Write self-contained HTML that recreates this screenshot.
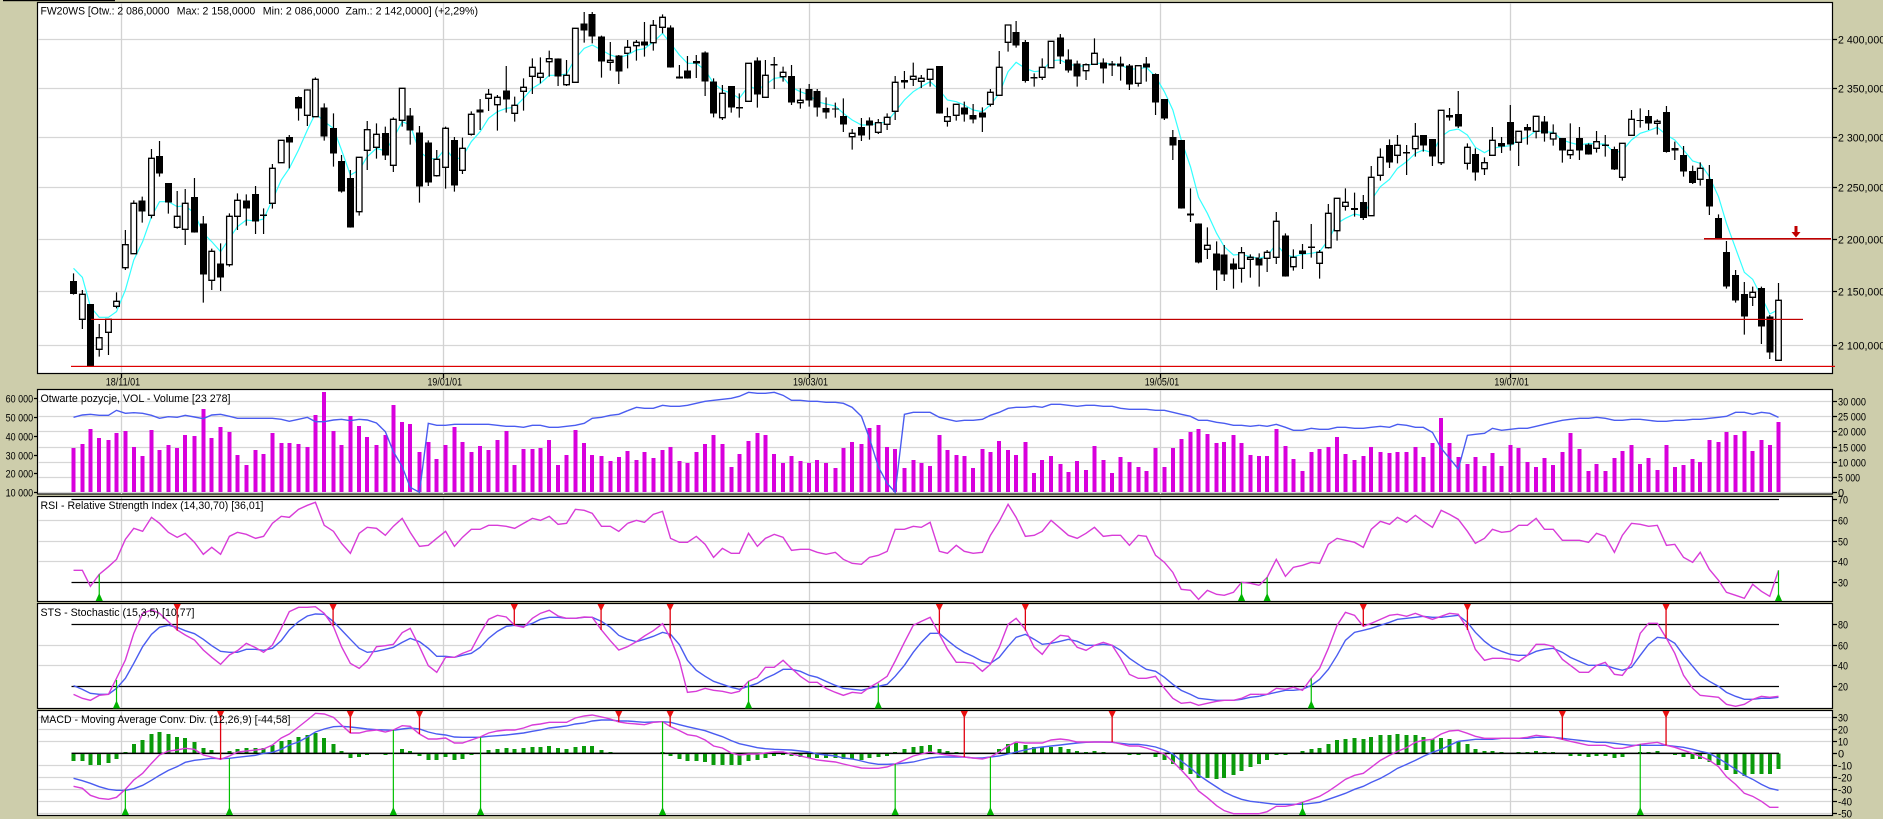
<!DOCTYPE html>
<html><head><meta charset="utf-8"><title>FW20WS</title>
<style>
html,body{margin:0;padding:0;background:#cdcdab;overflow:hidden}
svg{display:block}
svg path{vector-effect:non-scaling-stroke;fill:none}
text{font-family:"Liberation Sans",sans-serif;font-size:11px;fill:#000}
.g{stroke:#d6d6d6;stroke-width:1.3}
.v{stroke:#d2d2d2;stroke-width:1.3}
.k{stroke:#000;stroke-width:1.3}
.wk{stroke:#000;stroke-width:1.2}
.bb{stroke:#000;stroke-width:7;shape-rendering:crispEdges}
.wb{stroke:#000;stroke-width:1.3;fill:#fff}
.cy{stroke:#33ffff;stroke-width:1.2}
.vo{stroke:#d800dc;stroke-width:4;shape-rendering:crispEdges}
.bl{stroke:#4a5cf0;stroke-width:1.4}
.mg{stroke:#d83cd8;stroke-width:1.4}
.hi{stroke:#0a9a0a;stroke-width:4;shape-rendering:crispEdges}
.gl{stroke:#00c000;stroke-width:1.2}
.gt{fill:#00b400}
.rl{stroke:#e00010;stroke-width:1.3}
.rt{fill:#e81010}
.fr{fill:#fff;stroke:#000;stroke-width:1.2}
</style></head><body>
<svg xmlns="http://www.w3.org/2000/svg" width="1883" height="819" viewBox="0 0 1883 819">
<rect width="1883" height="819" fill="#cdcdab"/>
<rect x="3" y="0" width="112" height="1.2" fill="#000"/>
<rect class="fr" x="37.5" y="2.5" width="1795" height="371"/>
<rect class="fr" x="37.5" y="389.5" width="1795" height="104.5"/>
<rect class="fr" x="37.5" y="496.5" width="1795" height="105"/>
<rect class="fr" x="37.5" y="603.5" width="1795" height="105"/>
<rect class="fr" x="37.5" y="710.5" width="1795" height="105"/>

<path class="g" d="M38 39.5H1832M38 88.5H1832M38 137.5H1832M38 187.5H1832M38 239.5H1832M38 291.5H1832M38 345.5H1832"/>
<path class="g" d="M38 401.5H1832M38 416.5H1832M38 431.5H1832M38 447.5H1832M38 462.5H1832M38 477.5H1832M38 492.5H1832"/>
<path class="g" d="M38 520.5H1832M38 541.5H1832M38 561.5H1832"/>
<path class="g" d="M38 645.5H1832M38 665.5H1832"/>
<path class="g" d="M38 717.5H1832M38 729.5H1832M38 741.5H1832M38 765.5H1832M38 777.5H1832M38 789.5H1832M38 801.5H1832M38 813.5H1832"/>
<path class="v" d="M121.5 3V373M443.5 3V373M809.5 3V373M1160.5 3V373M1510.5 3V373M121.5 390V494M443.5 390V494M809.5 390V494M1160.5 390V494M1510.5 390V494M121.5 497V601M443.5 497V601M809.5 497V601M1160.5 497V601M1510.5 497V601M121.5 604V708M443.5 604V708M809.5 604V708M1160.5 604V708M1510.5 604V708M121.5 711V815M443.5 711V815M809.5 711V815M1160.5 711V815M1510.5 711V815"/>
<path class="k" d="M121.5 373V378M443.5 373V378M809.5 373V378M1160.5 373V378M1510.5 373V378"/>
<path class="k" d="M71.5 499.5H1779M71.5 582.5H1779M71.5 624.5H1779M71.5 686.5H1779M71.5 753.5H1779"/>
<!-- ticks -->
<path class="k" d="M1833 39.5H1837M1833 88.5H1837M1833 137.5H1837M1833 187.5H1837M1833 239.5H1837M1833 291.5H1837M1833 345.5H1837M1833 401.5H1837M1833 416.5H1837M1833 431.5H1837M1833 447.5H1837M1833 462.5H1837M1833 477.5H1837M1833 492.5H1837M1833 499.5H1837M1833 520.5H1837M1833 541.5H1837M1833 561.5H1837M1833 582.5H1837M1833 624.5H1837M1833 645.5H1837M1833 665.5H1837M1833 686.5H1837M1833 717.5H1837M1833 729.5H1837M1833 741.5H1837M1833 753.5H1837M1833 765.5H1837M1833 777.5H1837M1833 789.5H1837M1833 801.5H1837M1833 813.5H1837M34 398.5H37M34 417.5H37M34 436.5H37M34 455.5H37M34 473.5H37M34 492.5H37"/>

<!-- candles top-left -->
<g transform="scale(.40179,.33333)">
<path class="cy" d="M183 805 205 832 225 920 247 952 270 952 290 935 312 870 333 780 355 725 377 650 397 605 419 605 441 620 461 617 484 640 506 700 527 725 549 755 571 715 591 680 613 660 636 663 656 657 678 600 700 540 720 505 743 450 765 390 785 340 807 365 830 385 850 450 872 525 894 510 914 470 937 445 959 453 979 415 1001 365 1021 375 1044 455 1066 475 1087 477 1109 445 1131 480 1151 470 1173 425 1195 395 1216 355 1238 335 1260 325 1281 322 1303 295 1325 265 1345 250 1367 226 1389 226 1410 222 1432 175 1454 145 1474 135 1497 150 1519 165 1540 173 1562 165"/>
<path class="wk" d="M183 820V884M205 870V987M225 912V1099M247 972V1070M270 958V1065M290 877V925M312 690V810M333 601V761M354 590V668M377 447V655M397 423V530M419 549V641M441 573V686M461 567V735M484 534V698M506 648V908M527 746V870M549 730V873M571 640V800M591 580V690M613 583V677M636 558V702M656 625V702M678 492V626M700 421V488M720 405V505M743 289V362M765 268V378M785 232V350M807 310V422M830 340V500M850 465V578M872 510V683M894 472V647M914 363V510M937 370V476M959 380V480M979 352V516M1001 265V380M1021 324V434M1044 378V608M1066 421V558M1087 450V530M1109 380V566M1131 411V575M1151 413V522M1173 334V407M1195 297V390M1216 267V333M1238 285V392M1260 198V338M1281 290V365M1303 235V332M1325 175V282M1345 172V250M1367 152V230M1389 175V258M1410 180V258M1432 85V247M1454 36V128M1474 36V130M1497 107V233M1519 126V212M1540 165V252M1562 120V205"/>
<path class="bb" d="M183 843V882M225 912V1099M354 601V635M397 468V521M419 549V608M484 591V698M506 670V824M549 790V833M613 601V626M636 582V665M656 643V648M720 411V428M743 291V326M807 322V410M830 384V461M850 483V575M872 534V683M959 399V467M1021 346V392M1044 397V560M1066 427V548M1131 420V557M1195 328V338M1260 271V299M1389 175V230M1454 70V92M1474 42V110M1497 109V185M1540 166V215"/>
<path class="wb" d="M198 883h14V958h-14zM240 1013h14V1048h-14zM263 958h14V997h-14zM283 904h14V919h-14zM305 734h14V803h-14zM326 610h14V761h-14zM370 475h14V646h-14zM434 649h14V682h-14zM454 610h14V688h-14zM520 754h14V841h-14zM564 649h14V794h-14zM584 601h14V649h-14zM671 505h14V610h-14zM693 421h14V488h-14zM758 270h14V346h-14zM778 238h14V350h-14zM887 472h14V635h-14zM907 389h14V451h-14zM930 403h14V442h-14zM972 358h14V496h-14zM994 265h14V361h-14zM1080 478h14V527h-14zM1102 385h14V502h-14zM1144 445h14V511h-14zM1166 343h14V403h-14zM1209 283h14V295h-14zM1231 292h14V314h-14zM1274 316h14V340h-14zM1296 262h14V274h-14zM1318 202h14V229h-14zM1338 220h14V232h-14zM1360 176h14V185h-14zM1403 226h14V254h-14zM1425 85h14V247h-14zM1512 181h14V187h-14zM1555 142h14V160h-14z"/>
</g>
<!-- candles top-middle -->
<g transform="translate(630,0) scale(.40179,.33333)">
<path class="cy" d="M-6 165 16 150 36 146 58 126 81 100 101 130 123 165 143 190 165 190 187 210 208 250 230 270 252 280 272 295 295 258 317 268 337 255 359 235 381 232 402 262 424 275 446 285 466 305 488 312 511 318 531 340 553 360 576 375 596 375 618 370 640 365 660 335 683 300 705 275 725 260 747 245 770 270 790 300 812 305 832 315 854 330 877 335 897 315 919 280 941 215 961 187 984 205 1006 215 1026 212 1048 182 1071 180 1091 192 1113 198 1135 198 1156 190 1178 190 1200 192 1221 195 1243 207 1265 207 1285 202 1308 230 1330 275 1351 330 1372 420 1395 500 1415 592 1437 640 1460 700 1479 740 1502 765 1522 763 1544 770 1566 775"/>
<path class="wk" d="M16 120V182M36 66V170M58 60V152M81 43V100M101 76V203M123 195V236M143 168V236M165 165V234M187 154V288M208 235V352M230 255V360M252 258V338M272 280V353M295 190V304M317 172V323M337 180V292M359 171V267M381 200V245M402 195V315M424 265V326M446 252V320M466 267V350M488 292V356M511 308V353M531 295V396M553 387V449M576 354V423M596 352V419M618 357V402M640 340V390M660 228V360M683 213V266M705 188V258M725 225V264M747 208V260M770 198V341M790 323V380M812 313V362M832 305V365M854 312V370M877 322V396M897 267V320M919 153V286M941 75V155M961 63V143M984 120V248M1006 220V260M1026 175V240M1048 124V203M1071 102V192M1091 148V218M1113 182V260M1135 190V240M1156 115V193M1178 175V250M1200 183V228M1221 170V242M1243 192V270M1265 195V260M1285 171V245M1308 220V345M1330 297V360M1351 390V480M1372 420V626M1395 565V666M1415 670V790M1437 682V777M1460 724V870M1479 735V843M1502 775V866M1522 741V848M1544 763V833M1566 760V860"/>
<path class="bb" d="M36 124V137M101 82V203M123 229V236M143 211V236M165 183V190M187 157V245M208 244V341M252 258V323M272 321V326M317 181V284M359 192V197M402 228V308M446 267V302M466 273V323M488 324V338M511 326V329M531 348V374M576 381V407M596 361V377M683 240V248M770 198V341M832 322V344M854 345V359M877 337V353M961 96V137M984 126V243M1006 231V236M1071 112V170M1091 178V212M1113 190V230M1178 187V206M1200 190V197M1221 190V200M1243 196V254M1285 190V203M1308 222V308M1330 297V356M1351 411V437M1372 420V626M1395 640V647M1415 670V788M1460 760V812M1479 763V824M1502 790V809M1566 772V797"/>
<path class="wb" d="M9 127h14V137h-14zM51 76h14V128h-14zM74 52h14V82h-14zM223 280h14V353h-14zM288 190h14V304h-14zM330 226h14V292h-14zM374 217h14V230h-14zM417 301h14V308h-14zM546 400h14V410h-14zM611 368h14V397h-14zM633 352h14V373h-14zM653 247h14V334h-14zM698 229h14V238h-14zM718 235h14V244h-14zM740 208h14V238h-14zM783 350h14V364h-14zM805 313h14V346h-14zM890 277h14V313h-14zM912 202h14V286h-14zM934 75h14V127h-14zM1019 202h14V232h-14zM1041 124h14V203h-14zM1128 194h14V212h-14zM1149 160h14V193h-14zM1258 197h14V250h-14zM1430 736h14V748h-14zM1515 758h14V805h-14zM1537 772h14V778h-14z"/>
</g>
<!-- candles top-right -->
<g transform="translate(1260,0) scale(.39732,.33333)">
<path class="cy" d="M-2 775 18 768 41 732 64 765 84 770 107 763 129 760 150 755 172 720 194 670 215 655 238 642 260 648 280 600 303 560 326 538 346 505 369 485 391 460 411 450 434 458 456 410 477 392 499 387 522 405 542 442 565 458 585 445 608 440 630 437 651 420 673 412 695 392 716 395 738 397 761 420 781 428 804 435 827 430 847 432 869 432 892 458 912 452 935 420 957 400 978 392 1000 382 1023 405 1044 420 1066 450 1089 483 1108 490 1131 530 1154 590 1174 670 1197 745 1219 817 1240 838 1262 890 1283 942 1305 929"/>
<path class="wk" d="M18 750V816M41 636V792M64 700V830M84 748V812M107 732V807M129 672V773M150 750V836M172 612V746M194 595V722M215 565V632M238 578V650M260 585V660M280 498V647M303 445V542M326 418V504M346 405V490M369 435V525M391 369V470M411 405V455M434 417V498M456 331V495M477 324V362M499 273V384M522 430V509M542 445V542M565 472V525M585 381V466M608 411V459M630 315V452M651 394V498M673 372V434M695 349V415M716 348V425M738 373V437M761 414V488M781 370V477M804 381V480M827 430V464M847 393V458M869 405V470M892 440V510M912 430V542M935 330V408M957 325V383M978 330V390M1000 358V404M1023 318V458M1044 425V480M1066 438V530M1089 497V552M1108 487V557M1131 495V645M1154 643V716M1174 723V866M1197 810V908M1219 846V1004M1240 860V918M1262 860V1032M1283 945V1077M1305 849V1081"/>
<path class="bb" d="M64 706V830M107 751V762M129 739V744M238 624V630M260 606V654M326 435V488M369 456V461M411 405V437M434 417V470M477 345V353M499 342V380M542 462V518M608 429V440M630 366V434M673 381V392M716 364V401M761 414V452M804 414V452M827 433V464M869 433V438M892 447V509M957 360V363M978 348V371M1023 336V456M1044 444V452M1066 465V515M1089 513V549M1131 537V620M1154 654V716M1174 756V860M1197 825V902M1219 882V950M1262 864V980M1283 950V1058"/>
<path class="wb" d="M11 757h14V775h-14zM34 664h14V772h-14zM77 772h14V800h-14zM143 757h14V790h-14zM165 640h14V743h-14zM187 595h14V692h-14zM208 607h14V619h-14zM273 532h14V647h-14zM296 472h14V526h-14zM339 436h14V466h-14zM384 409h14V446h-14zM449 331h14V488h-14zM515 442h14V490h-14zM558 488h14V506h-14zM578 421h14V466h-14zM644 394h14V427h-14zM688 349h14V394h-14zM731 400h14V417h-14zM774 451h14V464h-14zM840 425h14V445h-14zM905 430h14V532h-14zM928 358h14V406h-14zM993 364h14V370h-14zM1101 505h14V538h-14zM1233 877h14V892h-14zM1298 901h14V1081h-14z"/>
</g>
<!-- red levels -->
<rect x="91" y="318.800" width="1712" height="1.200" fill="#c00000"/>
<rect x="71" y="365.800" width="1764" height="1.200" fill="#dd0000"/>
<rect x="1704" y="238" width="127" height="1.600" fill="#c00000"/>
<path d="M1794.500 226h3v6h3l-4.500 5.500-4.500-5.500h3z" style="fill:#c00000"/>

<!-- lower left -->
<g transform="translate(0,380) scale(.40179,.33333)">
<path class="vo" d="M183 336V204M205 336V192M225 336V147M247 336V174M270 336V180M290 336V159M312 336V153M333 336V201M355 336V228M377 336V150M397 336V210M419 336V195M441 336V204M461 336V165M484 336V168M506 336V87M527 336V174M549 336V141M571 336V156M591 336V225M613 336V255M636 336V210M656 336V222M678 336V159M700 336V189M720 336V189M743 336V192M765 336V201M785 336V105M807 336V36M830 336V153M850 336V195M872 336V108M894 336V138M914 336V171M937 336V195M959 336V165M979 336V75M1001 336V126M1021 336V132M1044 336V216M1066 336V186M1087 336V237M1109 336V195M1131 336V141M1151 336V186M1173 336V216M1195 336V198M1216 336V210M1238 336V180M1260 336V153M1281 336V255M1303 336V207M1325 336V207M1345 336V204M1367 336V180M1389 336V255M1410 336V225M1432 336V150M1454 336V189M1474 336V225M1497 336V228M1519 336V243M1540 336V231M1562 336V213"/>
<path class="bl" d="M183 112 205 105 225 103 247 106 270 106 290 91 312 100 333 98 355 100 377 106 397 115 419 110 441 112 461 106 484 111 506 116 527 105 549 103 571 109 591 115 613 115 636 115 656 115 678 115 700 118 720 124 743 118 765 112 785 125 807 125 830 120 850 118 872 122 894 118 914 120 937 129 959 155 979 215 1001 260 1021 322 1044 337 1066 130 1087 136 1109 136 1131 133 1151 133 1173 133 1195 133 1216 133 1238 136 1260 139 1281 139 1303 142 1325 136 1345 136 1367 142 1389 142 1410 139 1432 136 1454 130 1474 115 1497 112 1519 106 1540 103 1562 92"/>
<path class="mg" d="M183 571 205 571 225 619 247 583 270 560 290 538 312 478 333 445 355 454 377 412 397 430 419 457 441 472 461 460 484 487 506 523 527 502 549 523 571 469 591 457 613 463 636 475 656 469 678 430 700 409 720 412 743 388 765 376 785 367 807 436 830 454 850 490 872 520 894 460 914 442 937 445 959 466 979 439 1001 415 1021 457 1044 499 1066 496 1087 475 1109 454 1131 499 1151 472 1173 448 1195 448 1216 436 1238 436 1260 439 1281 445 1303 430 1325 415 1345 421 1367 409 1389 433 1410 430 1432 388 1454 391 1474 400 1497 439 1519 439 1540 454 1562 430"/>
<path class="bl" d="M183 917 205 928 225 940 247 943 270 943 290 925 312 895 333 850 355 800 377 763 397 742 419 736 441 742 461 752 484 761 506 778 527 797 549 814 571 817 591 817 613 808 636 808 656 811 678 805 700 782 720 750 743 725 765 708 785 702 807 703 830 725 850 750 872 778 894 805 914 817 937 814 959 808 979 802 1001 787 1021 775 1044 785 1066 805 1087 829 1109 829 1131 832 1151 826 1173 820 1195 802 1216 775 1238 754 1260 739 1281 736 1303 739 1325 730 1345 718 1367 712 1389 712 1410 715 1432 715 1454 712 1474 712 1497 724 1519 742 1540 766 1562 778"/>
<path class="mg" d="M183 943 205 955 225 961 247 946 270 943 290 895 312 840 333 760 355 700 377 690 397 700 419 725 441 750 461 765 484 780 506 810 527 832 549 853 571 825 591 812 613 790 636 803 656 817 678 795 700 745 720 695 743 682 765 682 785 680 807 700 830 740 850 800 872 850 894 865 914 843 937 800 959 797 979 793 1001 758 1021 745 1044 800 1066 857 1087 877 1109 832 1131 832 1151 820 1173 810 1195 760 1216 718 1238 706 1260 711 1281 736 1303 742 1325 715 1345 700 1367 691 1389 708 1410 715 1432 715 1454 711 1474 712 1497 750 1519 782 1540 810 1562 800"/>
<path class="hi" d="M183 1120V1143M205 1120V1143M225 1120V1155M247 1120V1155M270 1120V1149M290 1120V1137M312 1120V1116M333 1120V1092M355 1120V1080M377 1120V1062M397 1120V1056M419 1120V1062M441 1120V1071M461 1120V1074M484 1120V1086M506 1120V1104M527 1120V1110M571 1120V1113M591 1120V1107M613 1120V1104M636 1120V1104M656 1120V1104M678 1120V1095M700 1120V1083M720 1120V1080M743 1120V1071M765 1120V1065M785 1120V1059M807 1120V1074M830 1120V1092M850 1120V1113M872 1120V1134M894 1120V1131M914 1120V1125M959 1120V1125M1001 1120V1107M1021 1120V1113M1044 1120V1128M1066 1120V1140M1087 1120V1140M1109 1120V1131M1131 1120V1140M1151 1120V1137M1173 1120V1125M1216 1120V1110M1238 1120V1107M1260 1120V1104M1281 1120V1107M1303 1120V1104M1325 1120V1101M1345 1120V1101M1367 1120V1098M1389 1120V1104M1410 1120V1107M1432 1120V1101M1454 1120V1098M1474 1120V1098M1497 1120V1110M1519 1120V1116"/>
<path class="k" d="M178 1120H1568"/>
<path class="bl" d="M183 1195 205 1202 225 1210 247 1220 270 1228 290 1231 312 1231 333 1226 355 1216 377 1201 397 1186 419 1171 441 1160 461 1147 484 1141 506 1138 527 1135 549 1136 571 1135 591 1132 613 1129 636 1126 656 1120 678 1117 700 1108 720 1095 743 1086 765 1071 785 1056 807 1047 830 1040 850 1039 872 1041 894 1044 914 1047 937 1049 959 1050 979 1051 1001 1047 1021 1044 1044 1047 1066 1056 1087 1062 1109 1065 1131 1071 1151 1072 1173 1072 1195 1072 1216 1069 1238 1067 1260 1065 1281 1062 1303 1059 1325 1054 1345 1050 1367 1044 1389 1041 1410 1038 1432 1032 1454 1029 1474 1023 1497 1020 1519 1020 1540 1023 1562 1023"/>
<path class="mg" d="M183 1219 205 1225 225 1246 247 1255 270 1258 290 1252 312 1228 333 1200 355 1180 377 1150 397 1125 419 1113 441 1110 461 1105 484 1108 506 1125 527 1131 549 1138 571 1128 591 1116 613 1113 636 1110 656 1107 678 1095 700 1074 720 1062 743 1041 765 1020 785 1000 807 1002 830 1012 850 1035 872 1059 894 1059 914 1053 937 1050 959 1056 979 1050 1001 1037 1021 1039 1044 1062 1066 1077 1087 1077 1109 1074 1131 1089 1151 1089 1173 1080 1195 1071 1216 1059 1238 1053 1260 1050 1281 1050 1303 1044 1325 1035 1345 1032 1367 1027 1389 1027 1410 1027 1432 1014 1454 1008 1474 1005 1497 1011 1519 1017 1540 1026 1562 1030"/>
<path class="gl" d="M247 583V663M290 900V985M312 1228V1305M571 1135V1305M979 1050V1305M1196 1072V1305"/>
<path class="gt" d="M238 663h18l-9-24zM281 985h18l-9-24zM303 1305h18l-9-24zM562 1305h18l-9-24zM970 1305h18l-9-24zM1187 1305h18l-9-24z"/>
<path class="rl" d="M441 680V752M829 680V737M1280 680V736M1496 680V750M549 1000V1138M872 1000V1059M1044 1000V1062M1540 1000V1026"/>
<path class="rt" d="M432 672h18l-9 22zM820 672h18l-9 22zM1271 672h18l-9 22zM1487 672h18l-9 22zM540 993h18l-9 22zM863 993h18l-9 22zM1035 993h18l-9 22zM1531 993h18l-9 22z"/>
</g>
<!-- lower middle -->
<g transform="translate(630,380) scale(.40179,.33333)">
<path class="vo" d="M16 336V240M36 336V216M58 336V234M81 336V210M101 336V201M123 336V243M143 336V249M165 336V216M187 336V192M208 336V165M230 336V192M252 336V261M272 336V222M295 336V183M317 336V159M337 336V165M359 336V222M381 336V249M402 336V228M424 336V243M446 336V249M466 336V240M488 336V249M511 336V264M531 336V204M553 336V186M576 336V192M596 336V144M618 336V135M640 336V201M660 336V207M683 336V264M705 336V240M725 336V249M747 336V258M770 336V165M790 336V210M812 336V225M832 336V228M854 336V264M877 336V207M897 336V216M919 336V183M941 336V210M961 336V225M984 336V186M1006 336V279M1026 336V240M1048 336V228M1071 336V252M1091 336V276M1113 336V243M1135 336V270M1156 336V198M1178 336V240M1200 336V279M1221 336V231M1243 336V246M1265 336V261M1285 336V273M1308 336V204M1330 336V261M1351 336V204M1372 336V177M1395 336V156M1415 336V147M1437 336V162M1460 336V189M1479 336V186M1502 336V165M1522 336V189M1544 336V225M1566 336V228"/>
<path class="bl" d="M-6 92 16 82 36 85 58 85 81 76 101 79 123 79 143 76 165 70 187 64 208 61 230 58 252 55 272 49 295 37 317 40 337 40 359 37 381 46 402 61 424 61 446 64 466 64 488 67 511 67 531 70 553 82 576 109 596 175 618 260 640 310 660 337 683 103 705 97 725 97 747 97 770 112 790 118 812 124 832 121 854 121 877 118 897 106 919 97 941 85 961 82 984 82 1006 79 1026 82 1048 73 1071 73 1091 76 1113 79 1135 76 1156 76 1178 79 1200 79 1221 85 1243 88 1265 88 1285 88 1308 91 1330 91 1351 97 1372 103 1395 109 1415 121 1437 121 1460 127 1479 130 1502 136 1522 136 1544 139 1566 136"/>
<path class="mg" d="M-6 430 16 421 36 427 58 403 81 394 101 475 123 487 143 487 165 469 187 493 208 532 230 505 252 520 272 520 295 460 317 499 337 475 359 463 381 472 402 511 424 508 446 508 466 517 488 523 511 517 531 538 553 550 576 553 596 532 618 526 640 514 660 448 683 448 705 439 725 442 747 427 770 514 790 520 812 496 832 514 854 520 877 517 897 466 919 424 941 373 961 412 984 469 1006 466 1026 454 1048 421 1071 445 1091 466 1113 475 1135 460 1156 442 1178 469 1200 466 1221 466 1243 496 1265 466 1285 469 1308 526 1330 547 1351 577 1372 628 1395 631 1415 658 1437 631 1460 643 1479 646 1502 637 1522 607 1544 610 1566 616"/>
<path class="bl" d="M-6 778 16 785 36 778 58 769 81 757 101 763 123 794 143 841 165 871 187 889 208 904 230 913 252 922 272 928 295 919 317 910 337 895 359 883 381 868 402 868 424 874 446 886 466 892 488 904 511 916 531 925 553 928 576 931 596 925 618 919 640 913 660 889 683 856 705 817 725 787 747 760 770 760 790 781 812 802 832 817 854 829 877 844 897 850 919 832 941 799 961 772 984 763 1006 778 1026 793 1048 790 1071 784 1091 778 1113 784 1135 796 1156 796 1178 793 1200 796 1221 811 1243 835 1265 853 1285 868 1308 874 1330 892 1351 913 1372 931 1395 943 1415 955 1437 958 1460 961 1479 961 1502 961 1522 958 1544 952 1566 949"/>
<path class="mg" d="M-6 800 16 785 36 768 58 752 81 731 101 775 123 843 143 937 165 934 187 925 208 931 230 934 252 940 272 934 295 904 317 892 337 862 359 862 381 841 402 865 424 889 446 907 466 907 488 925 511 937 531 946 553 937 576 940 596 922 618 907 640 889 660 843 683 787 705 736 725 724 747 712 770 763 790 808 812 847 832 847 854 850 877 874 897 853 919 802 941 733 961 715 984 748 1006 802 1026 823 1048 787 1071 766 1091 769 1113 802 1135 811 1156 796 1178 787 1200 796 1221 835 1243 883 1265 895 1285 895 1308 889 1330 925 1351 955 1372 970 1395 967 1415 976 1437 970 1460 964 1479 961 1502 961 1522 955 1544 943 1566 943"/>
<path class="hi" d="M81 1120V1116M101 1120V1128M123 1120V1137M143 1120V1143M165 1120V1143M187 1120V1146M208 1120V1155M230 1120V1155M252 1120V1155M272 1120V1155M295 1120V1143M317 1120V1140M337 1120V1134M359 1120V1128M381 1120V1125M402 1120V1128M424 1120V1131M446 1120V1134M466 1120V1134M488 1120V1134M511 1120V1134M531 1120V1137M553 1120V1137M576 1120V1140M596 1120V1134M618 1120V1131M640 1120V1128M660 1120V1116M683 1120V1107M705 1120V1101M725 1120V1098M747 1120V1095M770 1120V1107M790 1120V1113M812 1120V1116M919 1120V1107M941 1120V1092M961 1120V1089M984 1120V1095M1006 1120V1101M1026 1120V1101M1048 1120V1101M1071 1120V1101M1091 1120V1107M1113 1120V1113M1135 1120V1116M1156 1120V1113M1178 1120V1116M1243 1120V1125M1265 1120V1125M1285 1120V1122M1308 1120V1131M1330 1120V1140M1351 1120V1152M1372 1120V1170M1395 1120V1182M1415 1120V1194M1437 1120V1194M1460 1120V1197M1479 1120V1194M1502 1120V1185M1522 1120V1173M1544 1120V1161M1566 1120V1152"/>
<path class="k" d="M0 1120H1568"/>
<path class="bl" d="M-6 1023 16 1025 36 1027 58 1026 81 1025 101 1027 123 1034 143 1040 165 1046 187 1052 208 1061 230 1070 252 1082 272 1091 295 1097 317 1103 337 1106 359 1108 381 1109 402 1110 424 1113 446 1116 466 1122 488 1125 511 1128 531 1134 553 1137 576 1143 596 1149 618 1153 640 1153 660 1152 683 1149 705 1146 725 1140 747 1134 770 1131 790 1131 812 1131 832 1131 854 1134 877 1134 897 1131 919 1128 941 1122 961 1116 984 1110 1006 1104 1026 1101 1048 1098 1071 1095 1091 1092 1113 1089 1135 1087 1156 1086 1178 1086 1200 1087 1221 1090 1243 1093 1265 1093 1285 1096 1308 1101 1330 1110 1351 1122 1372 1143 1395 1164 1415 1185 1437 1203 1460 1221 1479 1236 1502 1249 1522 1258 1544 1264 1566 1267"/>
<path class="mg" d="M-6 1030 16 1032 36 1034 58 1027 81 1025 101 1040 123 1052 143 1064 165 1068 187 1080 208 1098 230 1104 252 1119 272 1125 295 1122 317 1122 337 1119 359 1116 381 1116 402 1122 424 1128 446 1134 466 1140 488 1143 511 1146 531 1152 553 1158 576 1164 596 1165 618 1165 640 1161 660 1152 683 1140 705 1128 725 1122 747 1116 770 1122 790 1125 812 1128 832 1131 854 1134 877 1137 897 1131 919 1116 941 1098 961 1086 984 1089 1006 1089 1026 1089 1048 1080 1071 1077 1091 1080 1113 1086 1135 1086 1156 1086 1178 1086 1200 1086 1221 1092 1243 1098 1265 1098 1285 1104 1308 1113 1330 1122 1351 1145 1372 1170 1395 1200 1415 1233 1437 1253 1460 1277 1479 1292 1502 1301 1522 1301 1544 1301 1566 1301"/>
<path class="gl" d="M1522 607V663M295 904V985M618 910V985M81 1025V1305M660 1152V1305M897 1131V1305"/>
<path class="gt" d="M1513 663h18l-9-24zM286 985h18l-9-24zM609 985h18l-9-24zM72 1305h18l-9-24zM651 1305h18l-9-24zM888 1305h18l-9-24z"/>
<path class="rl" d="M100 680V775M770 680V760M984 680V752M100 1000V1040M832 1000V1131M1200 1000V1086"/>
<path class="rt" d="M91 672h18l-9 22zM761 672h18l-9 22zM975 672h18l-9 22zM91 993h18l-9 22zM823 993h18l-9 22zM1191 993h18l-9 22z"/>
</g>
<!-- lower right -->
<g transform="translate(1260,380) scale(.39732,.33333)">
<path class="vo" d="M18 336V228M41 336V147M64 336V198M84 336V237M107 336V273M129 336V216M150 336V207M172 336V201M194 336V171M215 336V222M238 336V240M260 336V228M280 336V201M303 336V216M326 336V219M346 336V216M369 336V216M391 336V201M411 336V231M434 336V189M456 336V114M477 336V189M499 336V231M522 336V252M542 336V231M565 336V258M585 336V219M608 336V258M630 336V195M651 336V204M673 336V246M695 336V261M716 336V234M738 336V255M761 336V216M781 336V159M804 336V207M827 336V273M847 336V252M869 336V273M892 336V234M912 336V213M935 336V195M957 336V252M978 336V234M1000 336V270M1023 336V195M1044 336V261M1066 336V255M1089 336V237M1108 336V246M1131 336V180M1154 336V186M1174 336V156M1197 336V165M1219 336V153M1240 336V213M1262 336V180M1283 336V195M1305 336V126"/>
<path class="bl" d="M-2 136 18 139 41 133 64 142 84 151 107 151 129 145 150 148 172 148 194 142 215 142 238 145 260 145 280 142 303 139 326 142 346 133 369 136 391 142 411 142 434 157 456 205 477 235 499 267 522 166 542 163 565 160 585 145 608 151 630 148 651 145 673 145 695 139 716 133 738 127 761 121 781 118 804 115 827 115 847 112 869 115 892 121 912 121 935 118 957 118 978 121 1000 124 1023 124 1044 121 1066 121 1089 118 1108 118 1131 115 1154 112 1174 109 1197 97 1219 97 1240 103 1262 97 1283 100 1305 112"/>
<path class="mg" d="M-2 616 18 592 41 538 64 589 84 562 107 556 129 547 150 550 172 493 194 475 215 481 238 487 260 502 280 448 303 424 326 433 346 412 369 427 391 406 411 424 434 442 456 391 477 403 499 418 522 454 542 490 565 475 585 448 608 457 630 454 651 436 673 436 695 415 716 448 738 448 761 481 781 481 804 481 827 487 847 460 869 469 892 517 912 466 935 430 957 433 978 439 1000 436 1023 496 1044 493 1066 532 1089 547 1108 517 1131 568 1154 601 1174 637 1197 646 1219 655 1240 613 1262 634 1283 649 1305 571"/>
<path class="bl" d="M-2 949 18 943 41 937 64 931 84 931 107 928 129 916 150 898 172 868 194 826 215 781 238 757 260 751 280 745 303 736 326 727 346 718 369 715 391 712 411 709 434 712 456 712 477 709 499 706 522 727 542 757 565 784 585 802 608 814 630 823 651 826 673 826 695 814 716 808 738 805 761 817 781 832 804 844 827 856 847 856 869 856 892 865 912 871 935 862 957 826 978 793 1000 772 1023 775 1044 790 1066 826 1089 859 1108 886 1131 904 1154 919 1174 937 1197 949 1219 958 1240 958 1262 955 1283 955 1305 952"/>
<path class="mg" d="M-2 943 18 943 41 925 64 928 84 922 107 931 129 895 150 865 172 805 194 736 215 697 238 706 260 739 280 730 303 718 326 706 346 703 369 709 391 700 411 709 434 718 456 709 477 700 499 703 522 745 542 808 565 841 585 835 608 835 630 838 651 844 673 826 695 793 716 793 738 799 761 838 781 856 804 877 827 877 847 856 869 847 892 883 912 886 935 850 957 760 978 730 1000 730 1023 775 1044 820 1066 886 1089 925 1108 946 1131 949 1154 952 1174 973 1197 979 1219 973 1240 958 1262 949 1283 952 1305 949"/>
<path class="hi" d="M18 1120V1140M41 1120V1125M64 1120V1125M107 1120V1113M129 1120V1107M150 1120V1104M172 1120V1092M194 1120V1080M215 1120V1077M238 1120V1074M260 1120V1077M280 1120V1071M303 1120V1065M326 1120V1065M346 1120V1062M369 1120V1065M391 1120V1065M411 1120V1071M434 1120V1077M456 1120V1074M477 1120V1077M499 1120V1083M522 1120V1092M542 1120V1107M565 1120V1113M585 1120V1113M608 1120V1116M651 1120V1116M673 1120V1116M695 1120V1113M716 1120V1116M738 1120V1116M781 1120V1128M804 1120V1128M827 1120V1131M847 1120V1128M869 1120V1128M892 1120V1134M912 1120V1131M957 1120V1116M978 1120V1116M1000 1120V1113M1044 1120V1125M1066 1120V1131M1089 1120V1137M1108 1120V1137M1131 1120V1146M1154 1120V1155M1174 1120V1170M1197 1120V1182M1219 1120V1188M1240 1120V1182M1262 1120V1182M1283 1120V1182M1305 1120V1167"/>
<path class="k" d="M0 1120H1306"/>
<path class="bl" d="M-2 1267 18 1270 41 1273 64 1273 84 1273 107 1273 129 1270 150 1267 172 1258 194 1249 215 1240 238 1228 260 1219 280 1207 303 1195 326 1180 346 1165 369 1153 391 1141 411 1129 434 1117 456 1108 477 1096 499 1084 522 1081 542 1078 565 1078 585 1078 608 1075 630 1075 651 1075 673 1075 695 1072 716 1072 738 1072 761 1075 781 1078 804 1081 827 1084 847 1087 869 1087 892 1090 912 1093 935 1096 957 1096 978 1096 1000 1096 1023 1096 1044 1099 1066 1102 1089 1108 1108 1114 1131 1120 1154 1135 1174 1150 1197 1168 1219 1186 1240 1198 1262 1213 1283 1225 1305 1231"/>
<path class="mg" d="M-2 1301 18 1295 41 1279 64 1279 84 1275 107 1267 129 1258 150 1249 172 1234 194 1216 215 1198 238 1186 260 1180 280 1162 303 1141 326 1126 346 1114 369 1103 391 1087 411 1081 434 1078 456 1062 477 1053 499 1051 522 1060 542 1069 565 1075 585 1075 608 1075 630 1075 651 1075 673 1072 695 1066 716 1069 738 1072 761 1078 781 1084 804 1090 827 1096 847 1096 869 1096 892 1105 912 1105 935 1099 957 1093 978 1090 1000 1087 1023 1096 1044 1102 1066 1111 1089 1120 1108 1129 1131 1141 1154 1160 1174 1190 1197 1213 1219 1240 1240 1249 1262 1264 1283 1282 1305 1282"/>
<path class="gl" d="M18 592V663M1305 571V663M129 895V985M107 1267V1305M957 1093V1305"/>
<path class="gt" d="M9 663h18l-9-24zM1296 663h18l-9-24zM120 985h18l-9-24zM98 1305h18l-9-24zM948 1305h18l-9-24z"/>
<path class="rl" d="M260 680V739M522 680V750M1022 680V775M761 1000V1078M1022 1000V1096"/>
<path class="rt" d="M251 672h18l-9 22zM513 672h18l-9 22zM1013 672h18l-9 22zM752 993h18l-9 22zM1013 993h18l-9 22z"/>
</g>

<!-- labels -->
<text x="40.500" y="14.500" textLength="129" lengthAdjust="spacingAndGlyphs">FW20WS [Otw.: 2 086,0000</text>
<text x="176.800" y="14.500" textLength="78.500" lengthAdjust="spacingAndGlyphs">Max: 2 158,0000</text>
<text x="262.800" y="14.500" textLength="76.500" lengthAdjust="spacingAndGlyphs">Min: 2 086,0000</text>
<text x="345.500" y="14.500" textLength="132.500" lengthAdjust="spacingAndGlyphs">Zam.: 2 142,0000] (+2,29%)</text>
<text x="105.700" y="385.700" textLength="34.500" lengthAdjust="spacingAndGlyphs">18/11/01</text>
<text x="427.500" y="385.700" textLength="34.500" lengthAdjust="spacingAndGlyphs">19/01/01</text>
<text x="793" y="385.700" textLength="35" lengthAdjust="spacingAndGlyphs">19/03/01</text>
<text x="1144.700" y="385.700" textLength="34.500" lengthAdjust="spacingAndGlyphs">19/05/01</text>
<text x="1494.400" y="385.700" textLength="34.500" lengthAdjust="spacingAndGlyphs">19/07/01</text>
<text x="40.500" y="402" textLength="190" lengthAdjust="spacingAndGlyphs">Otwarte pozycje, VOL - Volume [23 278]</text>
<text x="40.500" y="509" textLength="223" lengthAdjust="spacingAndGlyphs">RSI - Relative Strength Index (14,30,70) [36,01]</text>
<text x="40.500" y="616" textLength="154" lengthAdjust="spacingAndGlyphs">STS - Stochastic (15,3,5) [10,77]</text>
<text x="40.500" y="723" textLength="250" lengthAdjust="spacingAndGlyphs">MACD - Moving Average Conv. Div. (12,26,9) [-44,58]</text>

<text x="1838" y="43.500" textLength="53" lengthAdjust="spacingAndGlyphs">2 400,0000</text>
<text x="1838" y="92.500" textLength="53" lengthAdjust="spacingAndGlyphs">2 350,0000</text>
<text x="1838" y="141.500" textLength="53" lengthAdjust="spacingAndGlyphs">2 300,0000</text>
<text x="1838" y="191.500" textLength="53" lengthAdjust="spacingAndGlyphs">2 250,0000</text>
<text x="1838" y="243.500" textLength="53" lengthAdjust="spacingAndGlyphs">2 200,0000</text>
<text x="1838" y="295.500" textLength="53" lengthAdjust="spacingAndGlyphs">2 150,0000</text>
<text x="1838" y="349.500" textLength="53" lengthAdjust="spacingAndGlyphs">2 100,0000</text>

<text x="1838" y="405.500" textLength="28" lengthAdjust="spacingAndGlyphs">30 000</text>
<text x="1838" y="420.500" textLength="28" lengthAdjust="spacingAndGlyphs">25 000</text>
<text x="1838" y="435.500" textLength="28" lengthAdjust="spacingAndGlyphs">20 000</text>
<text x="1838" y="451.500" textLength="28" lengthAdjust="spacingAndGlyphs">15 000</text>
<text x="1838" y="466.500" textLength="28" lengthAdjust="spacingAndGlyphs">10 000</text>
<text x="1838" y="481.500" textLength="22" lengthAdjust="spacingAndGlyphs">5 000</text>
<text x="1838" y="496.500">0</text>
<text x="1838" y="503.500" textLength="10" lengthAdjust="spacingAndGlyphs">70</text>
<text x="1838" y="524.500" textLength="10" lengthAdjust="spacingAndGlyphs">60</text>
<text x="1838" y="545.500" textLength="10" lengthAdjust="spacingAndGlyphs">50</text>
<text x="1838" y="565.500" textLength="10" lengthAdjust="spacingAndGlyphs">40</text>
<text x="1838" y="586.500" textLength="10" lengthAdjust="spacingAndGlyphs">30</text>
<text x="1838" y="628.500" textLength="10" lengthAdjust="spacingAndGlyphs">80</text>
<text x="1838" y="649.500" textLength="10" lengthAdjust="spacingAndGlyphs">60</text>
<text x="1838" y="669.500" textLength="10" lengthAdjust="spacingAndGlyphs">40</text>
<text x="1838" y="690.500" textLength="10" lengthAdjust="spacingAndGlyphs">20</text>
<text x="1838" y="721.500" textLength="10" lengthAdjust="spacingAndGlyphs">30</text>
<text x="1838" y="733.500" textLength="10" lengthAdjust="spacingAndGlyphs">20</text>
<text x="1838" y="745.500" textLength="10" lengthAdjust="spacingAndGlyphs">10</text>
<text x="1838" y="757.500">0</text>
<text x="1838" y="769.500" textLength="14" lengthAdjust="spacingAndGlyphs">-10</text>
<text x="1838" y="781.500" textLength="14" lengthAdjust="spacingAndGlyphs">-20</text>
<text x="1838" y="793.500" textLength="14" lengthAdjust="spacingAndGlyphs">-30</text>
<text x="1838" y="805.500" textLength="14" lengthAdjust="spacingAndGlyphs">-40</text>
<text x="1838" y="817.500" textLength="14" lengthAdjust="spacingAndGlyphs">-50</text>

<text x="5.600" y="402.300" textLength="27.500" lengthAdjust="spacingAndGlyphs">60 000</text>
<text x="5.600" y="421.300" textLength="27.500" lengthAdjust="spacingAndGlyphs">50 000</text>
<text x="5.600" y="440.300" textLength="27.500" lengthAdjust="spacingAndGlyphs">40 000</text>
<text x="5.600" y="459.300" textLength="27.500" lengthAdjust="spacingAndGlyphs">30 000</text>
<text x="5.600" y="477.300" textLength="27.500" lengthAdjust="spacingAndGlyphs">20 000</text>
<text x="5.600" y="496.300" textLength="27.500" lengthAdjust="spacingAndGlyphs">10 000</text>
</svg>
</body></html>
